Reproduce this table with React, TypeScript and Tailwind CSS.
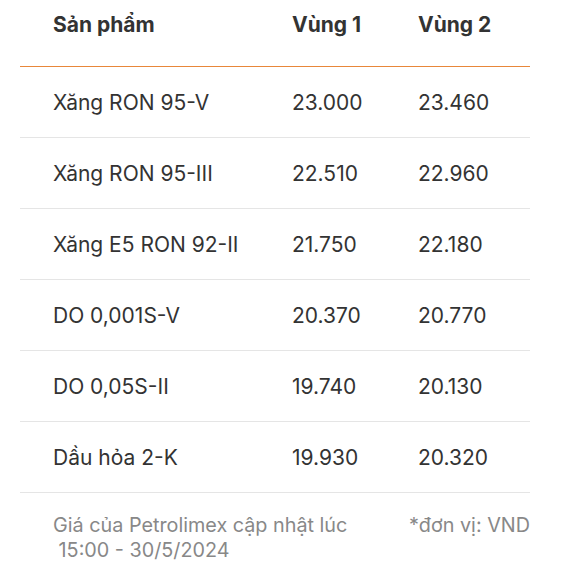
import React from "react";

const rows = [
  ["Xăng RON 95-V", "23.000", "23.460"],
  ["Xăng RON 95-III", "22.510", "22.960"],
  ["Xăng E5 RON 92-II", "21.750", "22.180"],
  ["DO 0,001S-V", "20.370", "20.770"],
  ["DO 0,05S-II", "19.740", "20.130"],
  ["Dầu hỏa 2-K", "19.930", "20.320"],
];

export default function App() {
  return (
    <div className="bg-white w-[561px] h-[573px] pl-[20px] pr-[31px] text-[#333333]" style={{ fontFamily: "Inter, 'Noto Sans', sans-serif" }}>
      <div className="grid grid-cols-[272px_126px_112px] h-[67px] items-center border-b border-[#e8873a] text-[21px] font-bold pb-[17px]">
        <div className="pl-[33px]">Sản phẩm</div>
        <div>Vùng 1</div>
        <div>Vùng 2</div>
      </div>
      {rows.map((r) => (
        <div key={r[0]} className="grid grid-cols-[272px_126px_112px] h-[71px] items-center border-b border-[#e5e5e5] text-[21px] pt-[2px]">
          <div className="pl-[33px]">{r[0]}</div>
          <div>{r[1]}</div>
          <div>{r[2]}</div>
        </div>
      ))}
      <div className="flex justify-between pt-[20px] text-[19.8px] text-[#888888] leading-[25px]">
        <div className="pl-[33px]">
          Giá của Petrolimex cập nhật lúc
          <br />
          &nbsp;15:00 - 30/5/2024
        </div>
        <div>*đơn vị: VND</div>
      </div>
    </div>
  );
}
